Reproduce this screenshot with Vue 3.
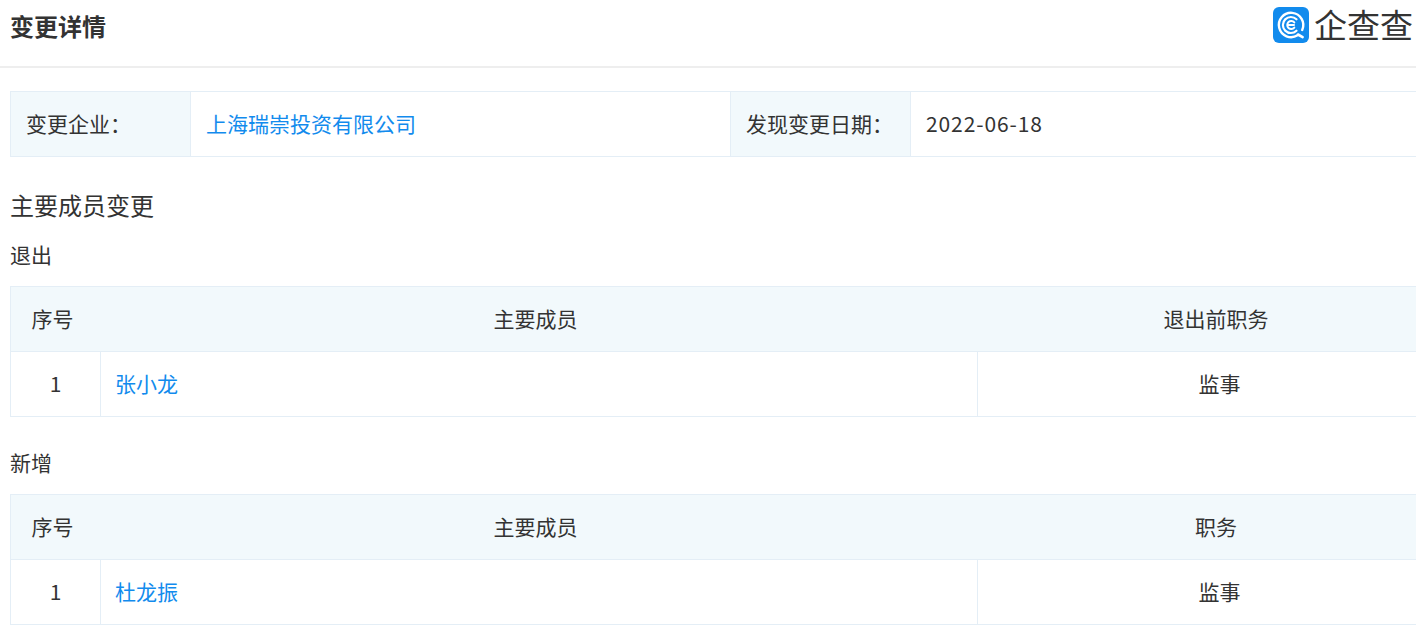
<script setup>
const info = [
  { label: '变更企业：', value: '上海瑞崇投资有限公司', link: true },
  { label: '发现变更日期：', value: '2022-06-18', link: false }
]
const groups = [
  { title: '退出', role: '退出前职务', name: '张小龙', duty: '监事' },
  { title: '新增', role: '职务', name: '杜龙振', duty: '监事' }
]
</script>

<template>
  <div class="page">
    <header class="top">
      <h1>变更详情</h1>
      <div class="logo">
        <svg width="36" height="36" viewBox="0 0 36 36" aria-hidden="true">
          <rect width="36" height="36" rx="6" fill="#128bed" />
          <path d="M24.6 28.3A12.2 12.2 0 1 1 29.2 23" fill="none" stroke="#fff" stroke-width="2.4" stroke-linecap="round" />
          <path d="M23.5 12.3A8 8 0 1 0 23.5 23.7" fill="none" stroke="#fff" stroke-width="2.2" stroke-linecap="round" />
          <path d="M21.3 15.4A4 4 0 1 0 21.3 20.6M15.5 18H21" fill="none" stroke="#fff" stroke-width="2" stroke-linecap="round" />
          <path d="M25 27.5l4.6 2.6" stroke="#fff" stroke-width="2.6" stroke-linecap="round" />
        </svg>
        <span>企查查</span>
      </div>
    </header>

    <section class="content">
      <div class="info">
        <template v-for="item in info" :key="item.label">
          <div class="info-label"><span class="nudge">{{ item.label }}</span></div>
          <div class="info-value" :class="{ link: item.link, date: !item.link }"><span class="nudge">{{ item.value }}</span></div>
        </template>
      </div>

      <h2>主要成员变更</h2>

      <div v-for="group in groups" :key="group.title" class="group">
        <h3>{{ group.title }}</h3>
        <div class="table">
          <div class="row head">
            <div class="cell">序号</div>
            <div class="cell">主要成员</div>
            <div class="cell">{{ group.role }}</div>
          </div>
          <div class="row body">
            <div class="cell">1</div>
            <div class="cell name link">{{ group.name }}</div>
            <div class="cell">{{ group.duty }}</div>
          </div>
        </div>
      </div>
    </section>
  </div>
</template>

<style>
html, body { margin: 0; overflow: hidden; background: #fff; }
</style>

<style scoped>
.page {
  width: 1416px;
  height: 636px;
  overflow: hidden;
  font-family: "Noto Sans CJK SC", "Liberation Sans", sans-serif;
  color: #333;
  font-size: 21px;
  font-weight: 400;
}
.top {
  height: 66px;
  border-bottom: 2px solid #eee;
  display: flex;
  justify-content: space-between;
  align-items: flex-start;
  padding-left: 10px;
}
h1 {
  margin: 0;
  font-size: 24px;
  font-weight: 700;
  line-height: 52px;
  color: #333;
}
.logo {
  display: flex;
  align-items: center;
  margin: 7px 3px 0 0;
  height: 36px;
}
.logo span {
  font-size: 33px;
  font-weight: 400;
  line-height: 36px;
  margin: -3px 0 0 5px;
  color: #333;
}
.content {
  padding: 23px 0 0 10px;
  width: 1500px;
}
.info {
  display: grid;
  grid-template-columns: 179px 540px 180px 560px;
  height: 66px;
  border: 1px solid #e4eef6;
  border-right: 0;
  box-sizing: border-box;
}
.info-label,
.info-value {
  display: flex;
  align-items: center;
  padding-left: 15px;
  box-sizing: border-box;
  border-left: 1px solid #e4eef6;
}
.info-label { background: #f2f9fc; }
.info-label:first-child { border-left: 0; }
.nudge { margin-top: -2px; }
.date { letter-spacing: 0.9px; }
.link { color: #128bed; }
h2 {
  margin: 0;
  padding-top: 30px;
  font-size: 24px;
  font-weight: 400;
  line-height: 36px;
}
.group h3 {
  margin: 0 0 17px;
  font-size: 21px;
  font-weight: 400;
  line-height: 30px;
}
h2 + .group { margin-top: 16px; }
.group + .group { margin-top: 30px; }
.table {
  border: 1px solid #e4eef6;
  border-right: 0;
  width: 1450px;
}
.row {
  display: grid;
  text-align: center;
}
.head {
  grid-template-columns: 83px 883px 478px;
  background: #f2f9fc;
  border-bottom: 1px solid #e4eef6;
  height: 65px;
  box-sizing: border-box;
}
.body {
  grid-template-columns: 89px 877px 484px;
  height: 64px;
}
.cell {
  display: flex;
  align-items: center;
  justify-content: center;
  box-sizing: border-box;
  padding-bottom: 3px;
}
.body .cell + .cell { border-left: 1px solid #e4eef6; }
.name {
  justify-content: flex-start;
  padding-left: 14px;
}
</style>
